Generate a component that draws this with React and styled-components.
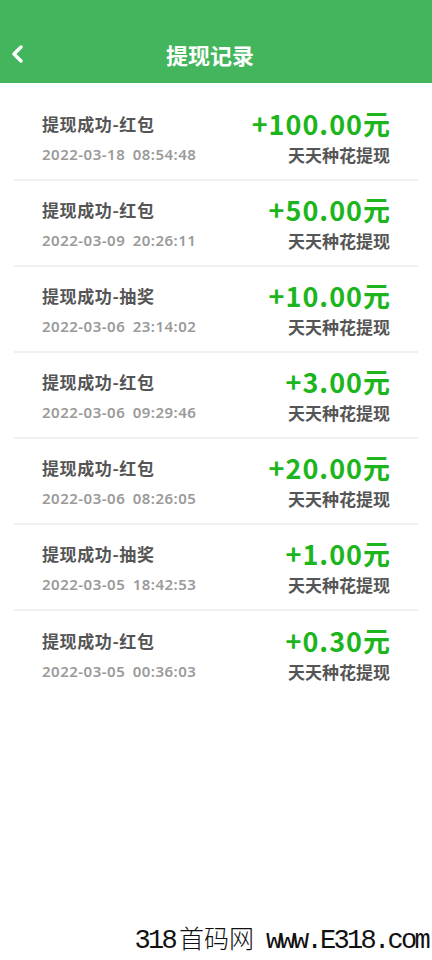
import React from "react";
import styled, { createGlobalStyle } from "styled-components";

const Global = createGlobalStyle`
  html, body { margin: 0; padding: 0; background: #fff; }
  body { font-family: "Noto Sans CJK SC", "Noto Sans", sans-serif; }
`;

const Page = styled.div`
  width: 432px;
  height: 960px;
  display: flex;
  flex-direction: column;
  background: #fff;
  overflow: hidden;
`;

const Header = styled.header`
  height: 83px;
  background: #43b55c;
  display: grid;
  grid-template-columns: 60px 1fr 72px;
  align-items: end;
  padding-bottom: 14px;
  box-sizing: border-box;
`;

const Back = styled.button`
  border: 0;
  background: none;
  padding: 0 0 0 10px;
  height: 30px;
  display: flex;
  align-items: center;
  cursor: pointer;
`;

const Title = styled.h1`
  margin: 0;
  text-align: center;
  color: #fff;
  font-size: 22px;
  font-weight: 700;
  line-height: 30px;
`;

const List = styled.ul`
  list-style: none;
  margin: 0;
  padding: 12px 14px 0;
`;

const Row = styled.li`
  height: 86px;
  box-sizing: border-box;
  padding: 0 28px;
  display: flex;
  justify-content: space-between;
  align-items: center;
  border-bottom: ${(p) => (p.$last ? "none" : "2px solid #f0f0f0")};
`;

const Col = styled.div`
  display: flex;
  flex-direction: column;
  align-items: ${(p) => (p.$right ? "flex-end" : "flex-start")};
  gap: ${(p) => (p.$right ? "5px" : "10px")};
  padding-top: ${(p) => (p.$right ? "0" : "4px")};
`;

const Label = styled.span`
  font-size: 17px;
  font-weight: 700;
  color: #555;
  line-height: 20px;
  letter-spacing: 0.6px;
`;

const Time = styled.span`
  font-family: "Noto Sans", sans-serif;
  font-size: 15px;
  font-weight: 600;
  color: #9a9a9a;
  line-height: 20px;
  letter-spacing: 0.5px;
  word-spacing: 3px;
`;

const Amount = styled.span`
  font-size: 27px;
  font-weight: 700;
  color: #1db51d;
  line-height: 30px;
  letter-spacing: 1px;
  margin-right: -1px;
`;

const Source = styled.span`
  font-size: 17px;
  font-weight: 700;
  color: #555;
  line-height: 22px;
`;

const Spacer = styled.div`
  flex: 1;
`;

const Footer = styled.div`
  text-align: right;
  padding: 0 4px 2px 0;
  font-family: "Liberation Mono", "Noto Sans CJK SC", monospace;
  font-size: 27px;
  letter-spacing: -2.7px;
  color: #111;
  line-height: 34px;
`;

const Cjk = styled.span`
  font-family: "Noto Sans CJK SC", sans-serif;
  font-weight: 300;
  font-size: 25px;
  letter-spacing: 0;
  margin: 0 12px 0 4px;
`;

const records = [
  ["提现成功-红包", "2022-03-18 08:54:48", "+100.00元"],
  ["提现成功-红包", "2022-03-09 20:26:11", "+50.00元"],
  ["提现成功-抽奖", "2022-03-06 23:14:02", "+10.00元"],
  ["提现成功-红包", "2022-03-06 09:29:46", "+3.00元"],
  ["提现成功-红包", "2022-03-06 08:26:05", "+20.00元"],
  ["提现成功-抽奖", "2022-03-05 18:42:53", "+1.00元"],
  ["提现成功-红包", "2022-03-05 00:36:03", "+0.30元"],
];

export default function App() {
  return (
    <Page>
      <Global />
      <Header>
        <Back aria-label="返回">
          <svg width="16" height="20" viewBox="0 0 16 20">
            <path d="M11 3 L4 10 L11 17" fill="none" stroke="#fff" strokeWidth="3.5" strokeLinecap="round" strokeLinejoin="round" />
          </svg>
        </Back>
        <Title>提现记录</Title>
        <span />
      </Header>
      <List>
        {records.map((r, i) => (
          <Row key={i} $last={i === records.length - 1}>
            <Col>
              <Label>{r[0]}</Label>
              <Time>{r[1]}</Time>
            </Col>
            <Col $right>
              <Amount>{r[2]}</Amount>
              <Source>天天种花提现</Source>
            </Col>
          </Row>
        ))}
      </List>
      <Spacer />
      <Footer>318<Cjk>首码网</Cjk>www.E318.com</Footer>
    </Page>
  );
}
